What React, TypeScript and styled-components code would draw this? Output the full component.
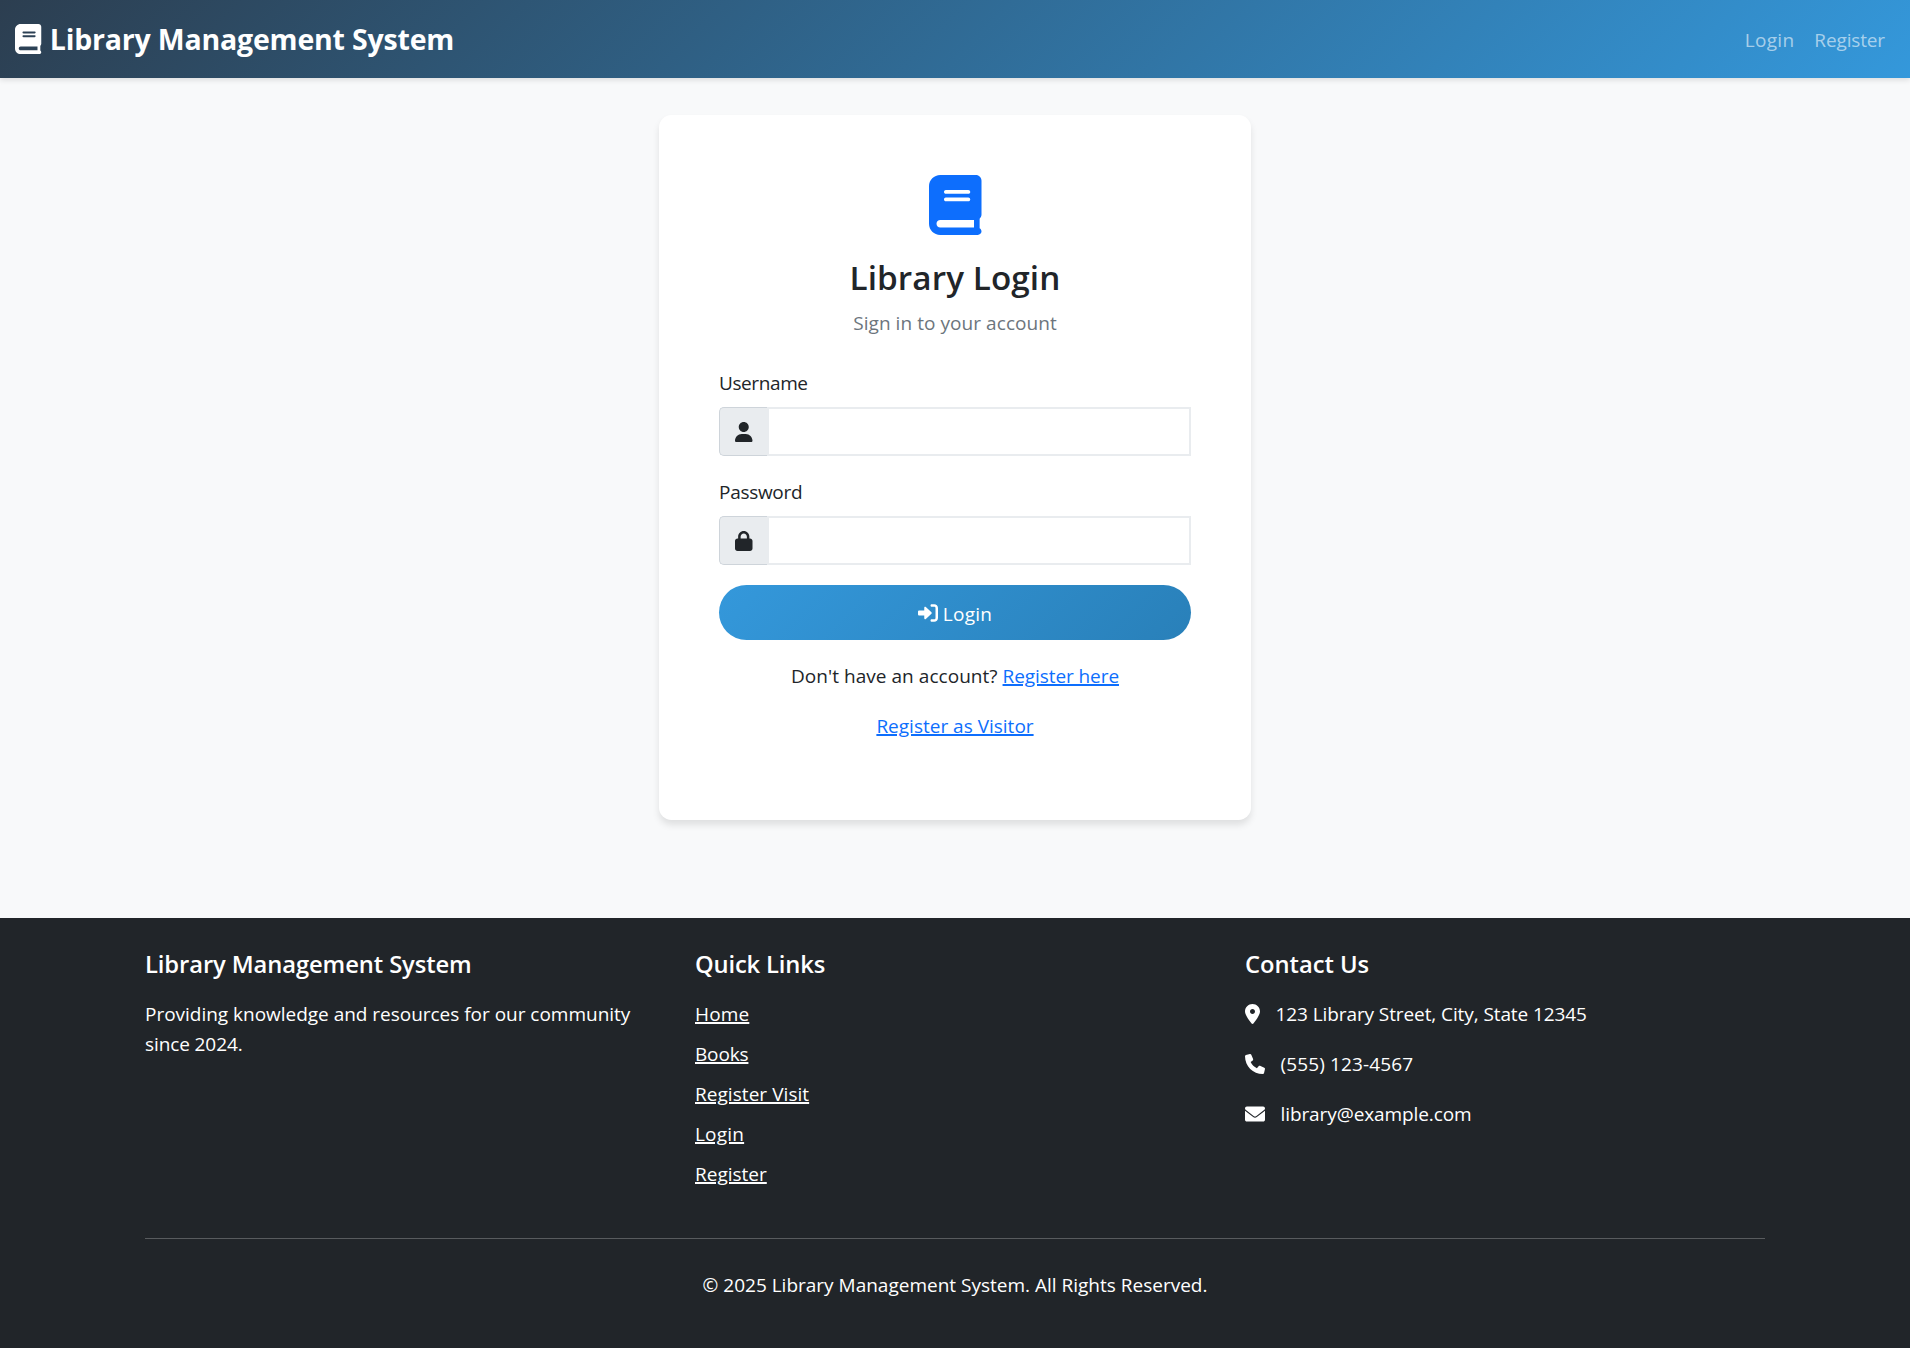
import React from "react";
import styled, { createGlobalStyle } from "styled-components";

const GlobalStyle = createGlobalStyle`
  *, *::before, *::after { box-sizing: border-box; }
  body {
    margin: 0;
    background: #f8f9fa;
    color: #212529;
    font-family: "Open Sans", "Noto Sans", sans-serif;
    font-size: 19px;
    line-height: 30px;
  }
  p, h2, h3, ul { margin: 0; padding: 0; }
`;

const icons = {
  book: {
    width: 448,
    path: "M448 336v-288C448 21.49 426.5 0 400 0H96C42.98 0 0 42.98 0 96v320c0 53.02 42.98 96 96 96h320c17.67 0 32-14.33 32-31.1c0-11.72-6.607-21.52-16-27.1v-81.36C441.8 362.8 448 350.2 448 336zM143.1 128h192C344.8 128 352 135.2 352 144C352 152.8 344.8 160 336 160H143.1C135.2 160 128 152.8 128 144C128 135.2 135.2 128 143.1 128zM143.1 192h192C344.8 192 352 199.2 352 208C352 216.8 344.8 224 336 224H143.1C135.2 224 128 216.8 128 208C128 199.2 135.2 192 143.1 192zM384 448H96c-17.67 0-32-14.33-32-32c0-17.67 14.33-32 32-32h288V448z",
  },
  user: {
    width: 448,
    path: "M224 256c70.7 0 128-57.31 128-128s-57.3-128-128-128C153.3 0 96 57.31 96 128S153.3 256 224 256zM274.7 304H173.3C77.61 304 0 381.6 0 477.3c0 19.14 15.52 34.67 34.66 34.67h378.7C432.5 512 448 496.5 448 477.3C448 381.6 370.4 304 274.7 304z",
  },
  lock: {
    width: 448,
    path: "M80 192V144C80 64.47 144.5 0 224 0C303.5 0 368 64.47 368 144V192H384C419.3 192 448 220.7 448 256V448C448 483.3 419.3 512 384 512H64C28.65 512 0 483.3 0 448V256C0 220.7 28.65 192 64 192H80zM144 192H304V144C304 99.82 268.2 64 224 64C179.8 64 144 99.82 144 144V192z",
  },
  signIn: {
    width: 512,
    path: "M344.7 238.5l-144.1-136C193.7 95.97 183.4 94.17 174.6 97.95C165.8 101.8 160.1 110.4 160.1 120V192H32.02C14.33 192 0 206.3 0 224v64c0 17.68 14.33 32 32.02 32h128.1v72c0 9.578 5.707 18.25 14.51 22.05c8.803 3.781 19.03 1.984 26-4.594l144.1-136C354.3 264.4 354.3 247.6 344.7 238.5zM416 32h-64c-17.67 0-32 14.33-32 32s14.33 32 32 32h64c17.67 0 32 14.33 32 32v256c0 17.67-14.33 32-32 32h-64c-17.67 0-32 14.33-32 32s14.33 32 32 32h64c53.02 0 96-42.98 96-96V128C512 74.98 469 32 416 32z",
  },
  pin: {
    width: 384,
    path: "M168.3 499.2C116.1 435 0 279.4 0 192C0 85.96 85.96 0 192 0C298 0 384 85.96 384 192C384 279.4 267 435 215.7 499.2C203.4 514.5 180.6 514.5 168.3 499.2zM192 256C227.3 256 256 227.3 256 192C256 156.7 227.3 128 192 128C156.7 128 128 156.7 128 192C128 227.3 156.7 256 192 256z",
  },
  phone: {
    width: 512,
    path: "M511.2 387l-23.25 100.8c-3.266 14.25-15.79 24.22-30.46 24.22C205.2 512 0 306.8 0 54.5c0-14.66 9.969-27.2 24.22-30.45l100.8-23.25C139.7-2.602 154.7 5.018 160.8 18.92l46.52 108.5c5.438 12.78 1.77 27.67-8.98 36.45L144.5 207.1c33.98 69.22 90.26 125.5 159.5 159.5l44.08-53.8c8.688-10.78 23.69-14.51 36.47-8.975l108.5 46.51C506.1 357.2 514.6 372.4 511.2 387z",
  },
  envelope: {
    width: 512,
    path: "M256 352c-16.53 0-33.06-5.422-47.16-16.41L0 173.2V400C0 426.5 21.49 448 48 448h416c26.51 0 48-21.49 48-48V173.2l-208.8 162.5C289.1 346.6 272.5 352 256 352zM16.29 145.3l212.2 165.1c16.19 12.6 38.87 12.6 55.06 0l212.2-165.1C505.1 137.3 512 125 512 112C512 85.49 490.5 64 464 64h-416C21.49 64 0 85.49 0 112C0 125 6.01 137.3 16.29 145.3z",
  },
};

const IconSvg = styled.svg`
  display: block;
  flex: none;
  fill: currentColor;
  overflow: visible;
`;

function Icon({ name, size = 20 }: { name: keyof typeof icons; size?: number }) {
  const { width, path } = icons[name];
  return (
    <IconSvg viewBox={`0 0 ${width} 512`} width={(size * width) / 512} height={size} aria-hidden="true">
      <path d={path} />
    </IconSvg>
  );
}

const Page = styled.div`
  display: flex;
  flex-direction: column;
  min-height: 1348px;
  background: #f8f9fa;
`;

/* Letter spacing tuned per label, in pixels. */
const Text = styled.span<{ $track?: number }>`
  letter-spacing: ${({ $track = 0 }) => $track}px;
  white-space: nowrap;
`;

const Navbar = styled.nav`
  display: flex;
  align-items: center;
  justify-content: space-between;
  height: 78px;
  padding: 0 25px 0 15px;
  background: linear-gradient(135deg, #2c3e50, #3498db);
  box-shadow: 0 2.5px 5px rgba(0, 0, 0, 0.1);
`;

const Brand = styled.a`
  display: flex;
  align-items: center;
  gap: 8.5px;
  color: #fff;
  font-size: 28.5px;
  font-weight: 700;
  line-height: 45px;
  text-decoration: none;

  svg { margin-top: -1px; }
`;

const NavLinks = styled.div`
  display: flex;
  gap: 20px;
  padding-top: 2px;
`;

const NavLink = styled.a`
  color: rgba(255, 255, 255, 0.58);
  text-decoration: none;
`;

const Main = styled.main`
  display: flex;
  justify-content: center;
  padding: 37px 15px 98px;
`;

const Card = styled.section`
  display: flex;
  flex-direction: column;
  width: 592px;
  height: 705px;
  padding: 59px 60px 0;
  background: #fff;
  border-radius: 12.5px;
  box-shadow: 0 5px 7.5px rgba(0, 0, 0, 0.1);
`;

const CardHeader = styled.header`
  display: flex;
  flex-direction: column;
  align-items: center;
  margin-bottom: 30px;

  svg { margin: 0.5px 0 21.5px; color: #0d6efd; }
`;

const CardTitle = styled.h2`
  margin-bottom: 10px;
  font-size: 33.25px;
  font-weight: 600;
  line-height: 42px;
`;

const Muted = styled.p`
  color: #6c757d;
`;

const Field = styled.div`
  display: flex;
  flex-direction: column;
  gap: 9px;
  margin-bottom: 21px;
`;

const InputGroup = styled.div`
  display: flex;
  height: 49px;
`;

const Addon = styled.span`
  display: flex;
  align-items: center;
  width: 48px;
  padding-left: 15px;
  background: #e9ecef;
  border: 1px solid #ced4da;
  border-right: 0;
  border-radius: 5px 0 0 5px;
  color: #212529;
`;

const Input = styled.input`
  flex: 1;
  min-width: 0;
  padding: 7px 15px;
  background: #fff;
  border: 2px solid #e9ecef;
  border-radius: 0;
  font: inherit;
  outline: none;
`;

const SubmitButton = styled.button`
  display: flex;
  align-items: center;
  justify-content: center;
  gap: 5px;
  height: 55px;
  margin: -1px 0 21px;
  padding: 2px 0 0;
  background: linear-gradient(135deg, #3498db, #2980b9);
  border: 0;
  border-radius: 28px;
  color: #fff;
  font: inherit;

  svg { margin-top: -1px; }
`;

const Prompt = styled.p`
  margin-bottom: 20px;
  text-align: center;
`;

const Link = styled.a<{ $light?: boolean }>`
  color: ${({ $light }) => ($light ? "#fff" : "#0d6efd")};
  text-decoration: underline 2px;
  text-underline-offset: 1px;
`;

const Footer = styled.footer`
  flex: 1;
  display: flex;
  flex-direction: column;
  align-items: center;
  padding-top: 31px;
  background: #212529;
  color: #fff;
`;

const FooterColumns = styled.div`
  display: grid;
  grid-template-columns: repeat(3, 520px);
  column-gap: 30px;
  height: 289px;
`;

const FooterTitle = styled.h3`
  margin-bottom: 20px;
  font-size: 23.75px;
  font-weight: 600;
  line-height: 30px;
`;

const LinkList = styled.ul`
  display: flex;
  flex-direction: column;
  gap: 10px;
  list-style: none;
`;

const ContactList = styled.div`
  display: flex;
  flex-direction: column;
  gap: 20px;
`;

const ContactRow = styled.p`
  display: flex;
  align-items: center;
  gap: 15.5px;

  svg { margin-top: -1px; }
`;

const Divider = styled.div`
  width: 1620px;
  height: 1px;
  background: #585b5e;
`;

const Copyright = styled.p`
  padding-top: 31px;
`;

export default function App() {
  return (
    <Page>
      <GlobalStyle />
      <Navbar>
        <Brand>
          <Icon name="book" size={30} />
          <Text $track={-0.19}>Library Management System</Text>
        </Brand>
        <NavLinks>
          <NavLink><Text $track={0.3}>Login</Text></NavLink>
          <NavLink><Text $track={-0.14}>Register</Text></NavLink>
        </NavLinks>
      </Navbar>

      <Main>
        <Card>
          <CardHeader>
            <Icon name="book" size={60} />
            <CardTitle><Text $track={0.1}>Library Login</Text></CardTitle>
            <Muted><Text $track={0.06}>Sign in to your account</Text></Muted>
          </CardHeader>

          <Field>
            <Text $track={-0.4}>Username</Text>
            <InputGroup>
              <Addon><Icon name="user" /></Addon>
              <Input type="text" />
            </InputGroup>
          </Field>
          <Field>
            <Text $track={-0.3}>Password</Text>
            <InputGroup>
              <Addon><Icon name="lock" /></Addon>
              <Input type="password" />
            </InputGroup>
          </Field>

          <SubmitButton type="button">
            <Icon name="signIn" />
            <Text $track={0.3}>Login</Text>
          </SubmitButton>

          <Prompt>
            <Text $track={0.04}>Don't have an account? </Text>
            <Link><Text $track={-0.08}>Register here</Text></Link>
          </Prompt>
          <Prompt>
            <Link><Text>Register as Visitor</Text></Link>
          </Prompt>
        </Card>
      </Main>

      <Footer>
        <FooterColumns>
          <div>
            <FooterTitle><Text $track={-0.09}>Library Management System</Text></FooterTitle>
            <p>
              <Text $track={-0.02}>Providing knowledge and resources for our community</Text>
              <br />
              <Text $track={-0.1}>since 2024.</Text>
            </p>
          </div>
          <div>
            <FooterTitle><Text $track={-0.15}>Quick Links</Text></FooterTitle>
            <LinkList>
              <li><Link $light><Text $track={0.15}>Home</Text></Link></li>
              <li><Link $light><Text $track={-0.15}>Books</Text></Link></li>
              <li><Link $light><Text $track={0.05}>Register Visit</Text></Link></li>
              <li><Link $light><Text $track={0.2}>Login</Text></Link></li>
              <li><Link $light><Text>Register</Text></Link></li>
            </LinkList>
          </div>
          <div>
            <FooterTitle><Text $track={-0.03}>Contact Us</Text></FooterTitle>
            <ContactList>
              <ContactRow>
                <Icon name="pin" />
                <Text $track={-0.09}>123 Library Street, City, State 12345</Text>
              </ContactRow>
              <ContactRow>
                <Icon name="phone" />
                <Text $track={0.14}>(555) 123-4567</Text>
              </ContactRow>
              <ContactRow>
                <Icon name="envelope" />
                <Text $track={-0.09}>library@example.com</Text>
              </ContactRow>
            </ContactList>
          </div>
        </FooterColumns>
        <Divider />
        <Copyright>
          <Text>© 2025 Library Management System. All Rights Reserved.</Text>
        </Copyright>
      </Footer>
    </Page>
  );
}
